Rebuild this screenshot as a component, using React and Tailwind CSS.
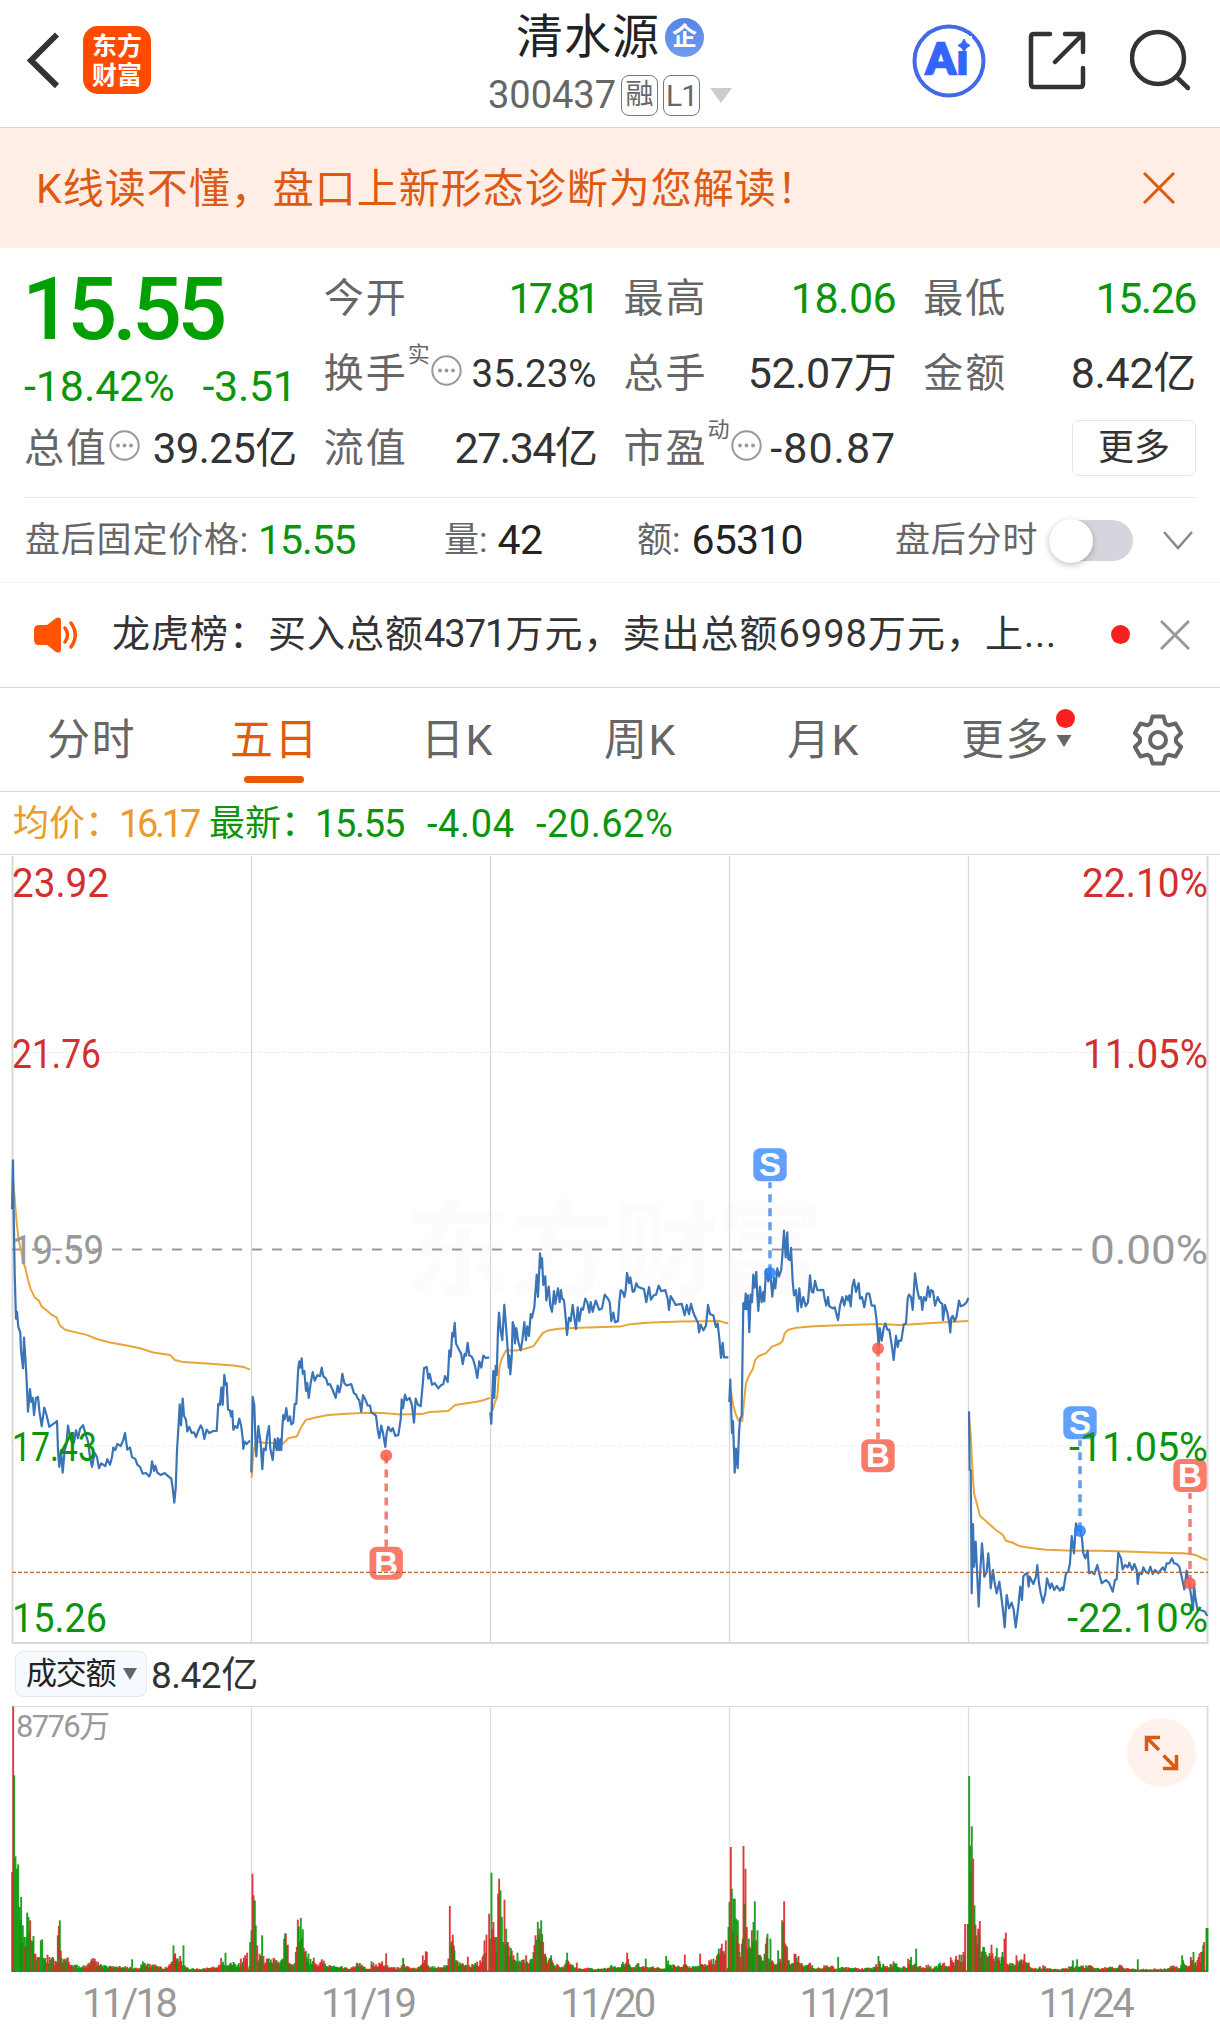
import { useState } from 'react';

const INDICES = [
  // x in thirds of a pixel, y in plot units below 1130
  {
    x0: 0,
    price: '36,230 39,88 41,240 44,420 48,548 51,528 55,572 61,588 63,640 69,692 72,603 76,660 80,730 84,818 90,752 94,790 98,778 102,828 108,778 114,775 118,815 125,860 133,806 140,830 148,862 158,855 165,850 171,845 174,930 178,978 183,930 188,995 194,930 199,915 204,858 208,880 215,905 222,908 228,872 234,895 240,868 249,857 256,880 264,905 270,950 276,978 284,938 291,950 297,982 304,968 316,976 322,956 330,972 336,950 340,922 346,930 352,912 362,918 370,900 375,880 382,928 390,922 396,950 406,955 412,972 420,978 428,998 438,996 448,1006 452,995 456,962 462,990 466,975 472,995 482,1002 494,996 504,1005 514,1012 518,1040 523,1082 527,1040 531,930 536,850 539,797 543,858 548,780 552,830 558,842 562,875 568,862 575,880 582,878 588,892 594,875 602,858 608,870 613,897 620,870 628,880 640,874 650,874 655,795 660,798 664,748 668,798 673,711 677,740 680,735 684,812 690,815 693,832 697,816 700,870 706,860 712,865 718,838 724,862 728,895 730,926 734,905 740,912 750,902',
    avg: '40,150 44,200 50,270 56,320 62,345 70,385 76,400 84,435 92,462 104,486 116,495 126,514 140,524 156,537 170,545 180,568 195,580 215,585 260,595 290,607 330,617 380,626 420,634 460,646 510,653 525,668 550,674 620,678 700,684 730,688 750,696',
  },
  {
    x0: 0,
    price: '754,995 758,775 763,800 766,890 769,948 775,860 782,910 787,985 791,925 797,930 801,890 807,860 811,925 818,958 824,898 830,930 833,895 837,930 841,898 844,930 847,865 850,828 854,840 859,808 864,845 870,832 874,855 880,850 884,795 889,795 892,745 895,690 898,672 901,690 905,663 908,708 913,700 918,758 922,735 926,778 932,735 938,703 944,728 952,712 960,715 965,690 970,715 978,722 984,740 990,738 998,755 1007,778 1013,742 1018,762 1023,742 1027,708 1033,735 1040,742 1054,738 1062,765 1068,768 1073,780 1078,785 1084,818 1089,770 1097,785 1103,800 1110,800 1114,820 1122,825 1128,830 1133,870 1138,895 1144,858 1149,880 1156,920 1160,880 1165,862 1172,875 1178,866 1186,888 1195,886 1202,840 1205,782 1209,808 1215,768 1220,785 1229,778 1236,800 1242,850 1247,780 1254,798 1262,802 1268,740 1272,692 1280,688 1285,722 1289,708 1296,740 1304,735 1315,750 1322,742 1330,738 1335,715 1343,732 1348,640 1352,658 1357,590 1360,600 1364,560 1368,620 1378,640 1383,648 1388,680 1394,650 1398,655 1403,618 1408,655 1415,658 1420,668 1425,685 1432,720 1438,672 1444,690 1450,655 1457,662 1468,660',
    avg: '755,1010 758,960 762,925 768,905 790,908 850,910 865,895 890,890 905,860 918,842 950,834 985,828 1040,824 1100,821 1150,822 1200,826 1265,825 1290,819 1345,816 1365,799 1390,795 1430,789 1450,785 1470,778',
  },
  {
    x0: 480,
    price: '31,820 34,853 37,770 40,700 43,778 47,685 50,712 54,580 57,530 62,585 67,610 73,508 78,570 82,620 86,690 88,655 91,710 95,660 98,558 102,570 105,620 109,575 115,615 122,640 127,612 133,558 138,610 142,570 147,598 152,535 156,545 163,515 170,420 174,485 180,358 184,400 186,372 190,450 196,425 199,495 206,455 211,510 216,528 222,468 226,505 234,460 239,500 243,465 246,488 252,495 257,545 261,595 267,545 272,555 278,508 283,545 288,578 293,515 298,555 304,518 309,522 316,490 322,500 328,530 332,500 338,528 347,495 358,522 366,518 374,478 384,490 389,500 394,555 400,530 405,558 414,555 418,500 422,465 428,470 433,485 437,465 441,415 447,445 451,428 458,470 463,468 469,445 475,456 492,462 499,500 507,456 513,493 521,480 528,478 536,452 544,468 556,465 563,490 567,522 572,482 580,495 587,508 605,505 614,538 620,508 627,535 633,505 640,530 648,548 654,560 657,588 662,565 670,582 678,568 684,508 690,535 700,538 708,572 713,562 718,605 723,662 728,618 732,660 745,660',
    avg: '38,815 45,790 52,775 58,690 65,665 78,640 110,640 135,635 160,628 175,608 188,590 205,582 235,577 300,574 420,571 445,565 500,560 600,556 720,555 735,560 745,561',
  },
  {
    x0: 480,
    price: '748,790 751,725 753,800 756,880 759,845 764,995 768,925 773,982 777,880 780,840 785,830 788,620 790,503 794,520 797,475 800,520 804,480 808,587 812,478 816,500 820,420 824,458 829,412 832,480 835,525 840,455 845,500 850,470 853,498 858,405 865,440 870,405 877,484 882,430 886,460 892,402 897,425 904,405 908,350 912,292 917,370 922,297 925,375 930,378 933,342 938,440 942,480 948,465 953,527 958,460 964,515 970,485 977,512 984,500 990,422 995,470 1000,472 1005,438 1012,465 1030,464 1034,490 1039,510 1044,485 1048,512 1058,518 1064,515 1074,552 1080,510 1087,485 1093,510 1099,482 1105,495 1108,480 1112,512 1117,455 1122,435 1128,470 1136,445 1140,490 1146,485 1153,515 1160,475 1168,475 1175,510 1184,510 1189,545 1193,590 1196,630 1199,575 1205,612 1211,575 1216,562 1222,580 1228,580 1235,625 1241,668 1248,598 1253,630 1257,612 1264,612 1271,565 1278,562 1283,490 1287,478 1293,485 1298,522 1305,416 1312,465 1318,490 1323,485 1327,522 1332,485 1338,495 1344,455 1349,485 1353,465 1359,468 1365,510 1373,485 1380,500 1387,505 1389,552 1395,508 1402,530 1408,560 1411,588 1414,545 1418,540 1424,555 1430,540 1437,495 1442,512 1452,508 1460,500 1465,488',
    avg: '752,755 760,800 767,825 775,843 787,845 792,790 798,735 806,715 818,695 826,668 835,657 858,648 875,630 900,620 908,612 914,590 925,580 950,574 1000,570 1100,566 1200,563 1260,566 1300,564 1380,559 1465,555',
  },
  {
    x0: 900,
    y0: 1380,
    unit: 3,
    price: '207,94 209,270 212,270 215,640 219,432 222,560 227,485 232,590 236,680 241,570 246,490 250,540 253,590 260,575 265,520 269,570 272,625 279,570 284,610 290,640 298,605 304,650 309,690 314,742 320,645 327,685 335,668 341,690 347,742 355,680 361,620 366,660 370,590 375,583 382,580 386,620 389,590 400,612 408,590 412,555 417,610 422,640 429,668 436,640 441,595 450,625 455,610 463,630 470,618 480,632 487,622 490,630 498,580 505,575 510,548 515,468 522,520 528,430 534,450 540,445 546,475 550,520 556,535 563,512 567,580 575,575 583,583 592,555 600,590 605,610 618,600 628,610 638,635 645,600 650,598 655,518 663,535 668,568 675,555 683,562 688,548 697,570 703,552 710,570 713,612 718,578 725,582 730,562 737,575 745,580 751,560 758,582 765,570 775,580 782,570 788,562 794,572 800,550 808,550 816,535 822,550 830,552 838,560 845,590 853,628 860,572 865,600 870,625 875,660 879,690 882,615 887,660 893,690 900,690 908,692 915,695 922,708',
    avg: '207,110 213,180 217,260 222,340 230,370 240,408 262,427 285,448 308,464 318,482 340,489 360,499 400,505 440,509 520,512 600,512 700,515 780,518 850,520 875,523 890,526 905,534 922,540',
  },
];

// turnover peaks, "x:height" with the bar's colour where it is fixed
const TURNOVER = [
  { x0: 0, bars: '36:300r 39:797r 42:590g 46:347g 50:310 54:323g 58:195g 63:225g 68:140g 72:105g 78:105g 81:178g 85:165 90:155r 94:95 100:108g 106:55 112:45 118:45 122:95g 126:98g 132:38 142:52 148:45 155:42 160:40 168:30 173:110g 179:155g 184:42 190:38 196:34 203:44r 210:22 220:16 230:22 240:12 250:20 262:22 274:38 278:42r 288:32 300:22 320:16 340:18 360:16 393:12 396:38g 399:10 420:12 428:32g 440:22 455:20 468:20 490:10 505:18 514:30 520:80g 525:56r 530:35 540:48 547:20 550:80g 554:20 570:8 600:8 630:12 650:14 663:42r 672:20 676:58g 680:20 700:30 710:15 722:40 735:50 741:58r 745:10 750:90' },
  { x0: 0, bars: '754:125 757:295r 760:230r 764:215g 767:140 771:80r 778:55 783:50 786:110g 790:48 800:40r 820:42 840:28 848:40 852:100g 857:115r 863:82r 868:28 880:20 887:60 893:157r 902:162g 908:128g 914:60 925:55 935:25 941:43 955:18 965:38 975:25 990:20 1010:14 1025:18 1045:8 1070:28 1085:22 1100:8 1111:10 1114:32 1125:18 1146:32 1155:20 1158:56r 1162:20 1180:14 1198:10 1205:20 1209:42g 1214:16 1240:10 1260:15 1268:50r 1280:60r 1285:18 1320:14 1340:20 1345:40 1349:198r 1353:88g 1358:112r 1363:65g 1370:35 1385:25 1399:20 1403:46r 1407:20 1440:35 1447:45 1453:95r 1459:112r 1463:5 1467:175r' },
  { x0: 480, bars: '31:100 34:298g 37:130 40:150r 45:105 50:105 54:235r 57:280r 61:245g 65:165 69:90 73:217r 78:130g 83:90 92:72 100:50 105:35 112:58g 122:30 138:50 147:25 160:60 166:110r 173:150g 178:130r 183:155g 189:90 195:55 205:35 213:50g 222:20 235:20 250:12 256:25 261:58g 266:30 280:16 287:14 290:28r 293:8 320:12 350:8 380:10 392:20 410:12 428:30 436:25 441:58r 446:25 462:15 472:26 485:15 493:16 497:40g 501:15 550:10 555:10 558:48g 570:22 585:18 608:16 614:52r 619:20 640:15 660:55r 666:24 680:20 687:35 700:40 707:35 716:70g 725:85r 737:95r 740:5 745:135' },
  { x0: 480, bars: '748:210g 752:375r 755:250g 760:220 764:220g 768:160 773:155 778:60 785:85r 790:378r 796:310r 800:135 806:100 815:125 820:150 824:212g 828:95 832:125g 837:50 850:35 857:85 862:115g 866:40 871:100g 876:35 888:20 894:65 900:40 906:155r 912:212r 917:80 921:76 926:35 932:20 943:55 955:48 962:25 978:20 990:28 1000:12 1020:10 1038:20 1060:16 1070:10 1074:45g 1078:12 1110:12 1140:8 1165:12 1185:14 1195:48g 1200:25 1225:14 1240:32r 1255:15 1265:10 1284:40r 1293:45g 1300:20 1308:70g 1312:16 1330:14 1345:22 1355:10 1376:24 1392:28 1400:16 1412:44r 1420:30 1428:48r 1438:52r 1450:60 1455:144r 1459:5 1463:144r' },
  { x0: 900, bars: '204:144r 207:588g 212:300g 215:437g 219:340r 223:200g 228:110 234:130 239:153r 244:60 249:75g 256:60 262:45 274:82r 280:40 290:72g 298:35 307:60 313:100r 317:118r 321:25 340:24 349:50r 357:30 365:35 373:54r 380:28 386:28 392:10 410:8 429:20r 440:10 470:6 500:10 510:15 518:35g 524:12 531:38g 540:15 566:20 580:12 600:8 630:16 645:10 659:22 670:12 690:8 709:8 713:38g 717:6 760:8 800:8 820:20 835:10 840:12 846:50g 852:25 858:20 866:18 872:45 880:60g 886:30 895:45 903:60 912:90r 916:5 919:132g 922:132g' },
];

const MARKS = [
  { type: 'B', x: 386.2, dot: 1455.5, box: 1546.7 },
  { type: 'S', x: 770, dot: 1273, box: 1148.2 },
  { type: 'B', x: 878, dot: 1348.5, box: 1439.3 },
  { type: 'S', x: 1080, dot: 1531, box: 1406.3 },
  { type: 'B', x: 1190, dot: 1583.5, box: 1459 },
];

const LABELS = [
  { y: 883, left: '23.92', lw: 97, right: '22.10%', rw: 126, fill: '#d32f2f' },
  { y: 1054, left: '21.76', lw: 89, right: '11.05%', rw: 125, fill: '#d32f2f' },
  { y: 1250, left: '19.59', lw: 92, right: '0.00%', rw: 118, fill: '#999' },
  { y: 1447, left: '17.43', lw: 85, right: '-11.05%', rw: 139, fill: '#0b950b' },
  { y: 1618, left: '15.26', lw: 95, right: '-22.10%', rw: 141, fill: '#0b950b' },
];

const GRID_X = [12.5, 251.5, 490.5, 729.5, 968.5, 1207.5];

function toPoints({ x0, y0 = 1130, unit = 2.904 }, raw) {
  return raw
    .split(' ')
    .map((p) => {
      const [x, y] = p.split(',').map(Number);
      return `${(x0 + x / 3).toFixed(1)},${(y0 + y / unit).toFixed(1)}`;
    })
    .join(' ');
}

function buildBars() {
  let seed = 11;
  const rand = () => {
    seed = (seed * 16807) % 2147483647;
    return seed / 2147483647;
  };
  const out = [];
  TURNOVER.forEach(({ x0, bars }) => {
    const keys = bars.split(' ').map((k) => {
      const [x, v] = k.split(':');
      return { x: Number(x), h: parseInt(v, 10), c: v.slice(-1) };
    });
    keys.forEach((k, i) => {
      const color = k.c === 'r' || k.c === 'g' ? k.c : rand() > 0.5 ? 'r' : 'g';
      out.push({ x: x0 + k.x / 3, h: k.h / 3, c: color });
      const next = keys[i + 1];
      if (!next) return;
      const low = Math.min(k.h, next.h);
      for (let x = k.x + 3; x < next.x - 1.5; x += 3) {
        const t = (x - k.x) / (next.x - k.x);
        const mid = Math.min(k.h + (next.h - k.h) * t, low * 1.3 + 4);
        out.push({ x: x0 + x / 3, h: (mid * (0.45 + rand() * 0.6)) / 3 + 1, c: rand() > 0.5 ? 'r' : 'g' });
      }
    });
  });
  return out;
}

const BARS = buildBars();

const GEAR = Array.from({ length: 6 }, (_, k) => {
  const a = (k * Math.PI) / 3;
  return [[-7.5, -16.5], [-5.5, -23.5], [5.5, -23.5], [7.5, -16.5]]
    .map(([x, y]) => `${(x * Math.cos(a) - y * Math.sin(a)).toFixed(1)},${(x * Math.sin(a) + y * Math.cos(a)).toFixed(1)}`)
    .join(' ');
}).join(' ');

function InfoDot({ className }) {
  return (
    <svg className={className} width="31" height="31" viewBox="0 0 31 31" fill="none">
      <circle cx="15.5" cy="15.5" r="14.2" stroke="#999" strokeWidth="2" />
      <circle cx="9" cy="15.5" r="1.9" fill="#999" />
      <circle cx="15.5" cy="15.5" r="1.9" fill="#999" />
      <circle cx="22" cy="15.5" r="1.9" fill="#999" />
    </svg>
  );
}

function Cell({ label, sup, info, value, valueClass }) {
  return (
    <div className="flex h-[75px] items-center">
      <span className="text-[40px] tracking-[2px] text-[#666] whitespace-nowrap">{label}</span>
      {sup && <span className="-mt-[38px] w-[22px] text-[22px] text-[#666]">{sup}</span>}
      {info && <InfoDot className="-mt-1.5 ml-px shrink-0" />}
      <span className={`ml-auto whitespace-nowrap ${valueClass}`}>{value}</span>
    </div>
  );
}

function Header() {
  return (
    <header className="grid h-[128px] grid-cols-[1fr_auto_1fr] border-b border-[#d5d5d0]">
      <div className="flex pt-[26px] pl-[26px]">
        <svg width="34" height="68" viewBox="0 0 34 68" fill="none" stroke="#333" strokeWidth="6">
          <path d="M31 8.5 5 34.5 31 60" />
        </svg>
        <div className="ml-[23px] flex size-[68px] flex-col items-center justify-center rounded-[15px] bg-[#ff4a00] pt-[3px] text-[25px] leading-[28.5px] font-bold text-white">
          <span>东方</span>
          <span>财富</span>
        </div>
      </div>
      <div className="flex flex-col items-center pt-[2px]">
        <div className="flex h-[71px] items-center pb-px">
          <span className="text-[47px] tracking-[1px] text-[#222]">清水源</span>
          <span className="ml-[5px] flex size-[39px] items-center justify-center rounded-full bg-gradient-to-b from-[#5585e6] to-[#6f9cf0] text-[25px] font-bold text-white">企</span>
        </div>
        <div className="flex h-[44px] items-center text-[#666]">
          <span className="text-[38px]">300437</span>
          <span className="ml-[5px] flex h-[41px] w-[37px] items-center justify-center rounded-[8px] border-[1.5px] border-[#777] text-[28px]">融</span>
          <span className="ml-[5px] flex h-[41px] w-[37px] items-center justify-center rounded-[8px] border-[1.5px] border-[#777] text-[30px] tracking-[-1px]">L1</span>
          <svg className="ml-[10px]" width="22" height="15" viewBox="0 0 22 15" fill="#ccc"><path d="M0 0h22L11 15z" /></svg>
        </div>
      </div>
      <div className="flex justify-end gap-[42px] pt-[24px] pr-[30px]">
        <svg width="74" height="74" viewBox="0 0 74 74">
          <circle cx="37" cy="37" r="34.5" fill="none" stroke="#4169e8" strokeWidth="4" />
          <text x="14" y="49.5" fontFamily="Lato" fontSize="42" fontWeight="900" fill="#3366ff" stroke="#3366ff" strokeWidth="2.500" textLength="42">Ai</text>
          <rect x="43" y="12" width="17" height="15" fill="#fff" />
          <path d="M52 15q1.500 5 6 6.500-4.500 1.500-6 6.500-1.500-5-6-6.500Q50.500 20 52 15z" fill="#3366ff" stroke="#3366ff" />
        </svg>
        <svg width="58" height="74" viewBox="0 0 58 74" fill="none" stroke="#333" strokeWidth="4.500" strokeLinecap="round" strokeLinejoin="round">
          <path d="M22 10H6q-3 0-3 3v47q0 3 3 3h46q3 0 3-3V44" />
          <path d="M37 10h18v18M55 10 27 38" />
        </svg>
        <svg className="ml-[2px]" width="60" height="74" viewBox="0 0 60 74" fill="none" stroke="#333" strokeWidth="4.500" strokeLinecap="round">
          <circle cx="28" cy="34" r="26" />
          <path d="m46.500 53 11.500 11" />
        </svg>
      </div>
    </header>
  );
}

function Quote() {
  const green = 'text-[43px] text-[#0b950b]';
  const dark = 'text-[43px] text-[#333]';
  return (
    <section className="h-[249px] px-[24px] pt-[13px]">
      <div className="grid h-[236px] grid-cols-4 gap-x-[27px]">
        <div className="flex flex-col">
          <div className="mt-[11px] -ml-[2px] h-[89px] text-[88px] leading-[74px] font-medium tracking-[-4.8px] text-[#00a000]">15.55</div>
          <div className="flex h-[50px] items-center justify-between text-[43px] leading-none whitespace-nowrap text-[#0b950b]">
            <span className="tracking-[-0.1px]">-18.42%</span>
            <span className="tracking-[-0.3px]">-3.51</span>
          </div>
          <Cell label="总值" info value="39.25亿" valueClass="text-[42px] text-[#333] tracking-[-0.6px]" />
        </div>
        <div className="flex flex-col">
          <Cell label="今开" value="17.81" valueClass={`${green} tracking-[-4px]`} />
          <Cell label="换手" sup="实" info value="35.23%" valueClass="text-[38.5px] text-[#333]" />
          <Cell label="流值" value="27.34亿" valueClass={`${dark} tracking-[-1.5px]`} />
        </div>
        <div className="flex flex-col">
          <Cell label="最高" value="18.06" valueClass={`${green} tracking-[-0.5px]`} />
          <Cell label="总手" value="52.07万" valueClass={`${dark} tracking-[-0.4px]`} />
          <Cell label="市盈" sup="动" info value="-80.87" valueClass={`${dark} tracking-[1px]`} />
        </div>
        <div className="flex flex-col">
          <Cell label="最低" value="15.26" valueClass={`${green} tracking-[-1.5px]`} />
          <Cell label="金额" value="8.42亿" valueClass={`${dark} tracking-[-0.3px]`} />
          <div className="flex h-[75px] items-center justify-end pb-[2px]">
            <button className="h-[56px] w-[124px] rounded-[7px] border-[1.5px] border-[#e4e4e4] text-[36px] leading-none text-[#333]">更多</button>
          </div>
        </div>
      </div>
    </section>
  );
}

function AfterHours() {
  return (
    <section className="mx-[24px] grid h-[85px] grid-cols-[419px_193px_260px_1fr] items-center border-t border-[#ebebeb] pt-[2px] pl-px text-[35px] text-[#666]">
      <div className="flex items-center">
        <span className="tracking-[0.8px]">盘后固定价格:</span>
        <span className="ml-[9px] text-[41px] tracking-[-1.1px] text-[#0b950b]">15.55</span>
      </div>
      <div className="flex items-center">量:<span className="ml-[10px] text-[41px] tracking-[-0.5px] text-[#222]">42</span></div>
      <div className="flex items-center">额:<span className="ml-[11px] text-[41px] tracking-[-0.8px] text-[#222]">65310</span></div>
      <div className="flex items-center">
        <span className="-ml-[2px] tracking-[0.8px]">盘后分时</span>
        <div className="-mt-[2px] ml-[11px] h-[41px] w-[84px] shrink-0 rounded-full bg-[#d5d5de]">
          <div className="-mt-px size-[44px] rounded-full bg-white shadow-[0_2px_6px_rgba(0,0,0,0.25)]" />
        </div>
        <svg className="-mt-[2px] ml-[30px]" width="30" height="19" viewBox="0 0 30 19" fill="none" stroke="#888" strokeWidth="2.500"><path d="m1 1 14 16L29 1" /></svg>
      </div>
    </section>
  );
}

function News() {
  return (
    <section className="flex h-[106px] items-center border-y border-t-[#eee] border-b-[#d9d9d9] pb-px pl-[34px]">
      <svg width="44" height="36" viewBox="0 0 44 36" fill="#ff5500">
        <path d="M5 8h8L22 1q5-2 5 3v28q0 5-5 3l-9-7H5q-5 0-5-5V13q0-5 5-5z" />
        <path d="M31 11q5 7 0 14M37 6q8.500 12 0 24" fill="none" stroke="#ff5500" strokeWidth="3.500" strokeLinecap="round" />
      </svg>
      <span className="ml-[34px] w-[960px] text-[38px] tracking-[1px] whitespace-nowrap text-[#333]">
        龙虎榜：买入总额<span className="tracking-[-1px]">4371</span>万元，卖出总额6998万元，上...
      </span>
      <span className="ml-[39px] size-[19px] rounded-full bg-[#fa2020]" />
      <svg className="ml-[30px]" width="30" height="30" viewBox="0 0 30 30" stroke="#999" strokeWidth="3"><path d="m1 1 28 28M29 1 1 29" /></svg>
    </section>
  );
}

function Tabs() {
  const [active, setActive] = useState('五日');
  const tabs = ['分时', '五日', '日K', '周K', '月K'];
  return (
    <nav className="flex h-[104px] items-center border-b border-[#d9d9d9] text-[43px] text-[#666]">
      {tabs.map((t) => (
        <button key={t} onClick={() => setActive(t)}
          className={`relative flex h-full w-[183px] items-center justify-center pt-[2px] tracking-[1.5px] ${active === t ? 'text-[#e25a0c]' : ''}`}>
          {t}
          {active === t && <span className="absolute bottom-[8px] left-[61px] h-[7px] w-[60px] rounded-full bg-[#e8590a]" />}
        </button>
      ))}
      <button className="relative ml-[46px] flex items-center pt-[2px] tracking-[1.5px]">
        更多
        <span className="absolute top-[3px] left-[95px] size-[19px] rounded-full bg-[#fa2020]" />
        <svg className="ml-[6px]" width="16" height="12" viewBox="0 0 15 12" fill="#666"><path d="M0 0h15L7.500 12z" /></svg>
      </button>
      <svg className="ml-[59px]" width="54" height="54" viewBox="-27 -27 54 54" fill="none" stroke="#666" strokeWidth="4" strokeLinejoin="round">
        <polygon points={GEAR} />
        <circle r="8" />
      </svg>
    </nav>
  );
}

function Mark({ type, x, dot, box }) {
  const up = box < dot;
  const fill = type === 'B' ? '#fb7b6b' : '#62a1fb';
  return (
    <g>
      <line x1={x} x2={x} y1={up ? box + 34 : dot} y2={up ? dot : box} stroke={type === 'B' ? '#f08074' : '#639fe8'} strokeWidth="3.500" strokeDasharray="8 6" strokeDashoffset={up ? 2 : 0} />
      <circle cx={x} cy={dot} r="6" fill={type === 'B' ? '#fb5a48' : '#2b80f5'} fillOpacity="0.85" />
      <rect x={x - 16.700} y={box} width="33.400" height="33" rx="7" fill={fill} />
      <text x={x} y={box + 28} fontFamily="Liberation Sans" fontWeight="700" fontSize="33" fill="#fff" textAnchor="middle">{type}</text>
    </g>
  );
}

function PriceChart() {
  return (
    <svg className="block" width="1220" height="791" viewBox="0 854 1220 791" fontFamily="Roboto, sans-serif">
      <text x="614" y="1288" textAnchor="middle" fontFamily="Noto Sans CJK SC" fontWeight="700" fontSize="104" fill="#fefbfe">东方财富</text>
      <g stroke="#d8d8d8" fill="none">
        <path d="M0 854.500H1220" />
        {GRID_X.map((x, i) => (
          <path key={x} d={`M${x} 856V1643`} strokeWidth={i === 0 || i === 5 ? 2 : 1.300} />
        ))}
        <path d="M12 1643H1208.500" strokeWidth="2" />
      </g>
      <path d="M12 1052.500H1208M12 1446H1208" stroke="#ddd" strokeDasharray="1 2" />
      <path d="M12 1249.500H1082" stroke="#999" strokeWidth="2" strokeDasharray="10 10" />
      {INDICES.map((d, i) => (
        <g key={i} fill="none" strokeLinejoin="round">
          <polyline points={toPoints(d, d.avg)} stroke="#e9a43a" strokeWidth="2" />
          <polyline points={toPoints(d, d.price)} stroke="#3a74b8" strokeWidth="2.200" />
        </g>
      ))}
      {MARKS.map((m) => <Mark key={m.x} {...m} />)}
      <path d="M12 1572.300H1208" stroke="#b5683c" strokeWidth="1.300" strokeDasharray="4 2" />
      {LABELS.map((l) => (
        <g key={l.y} fill={l.fill} fontSize="40">
          <text x="12" y={l.y + 14} textLength={l.lw} lengthAdjust="spacingAndGlyphs">{l.left}</text>
          <text x={1208 - l.rw} y={l.y + 14} textLength={l.rw} lengthAdjust="spacingAndGlyphs">{l.right}</text>
        </g>
      ))}
    </svg>
  );
}

function TurnoverChart() {
  return (
    <div className="relative">
      <svg className="block" width="1220" height="267" viewBox="0 1706 1220 267">
        <g stroke="#ddd" fill="none">
          <path d="M12 1706.500H1208" />
          {GRID_X.slice(1).map((x, i) => <path key={x} d={`M${x} 1706V1972`} strokeWidth={i === 4 ? 2 : 1.300} />)}
        </g>
        {BARS.map((b, i) => (
          <rect key={i} x={b.x - 0.800} y={1972 - b.h} width="1.900" height={b.h} fill={b.c === 'r' ? '#d62828' : '#0a960a'} fillOpacity="0.9" />
        ))}
        <text x="16" y="1737" fontFamily="Roboto, 'Noto Sans CJK SC'" fontSize="31" fill="#999" textLength="94">8776万</text>
      </svg>
      <button className="absolute top-[12px] right-[24px] size-[69px] rounded-full bg-[#fff1ec]">
        <svg width="69" height="69" viewBox="0 0 69 69" fill="none" stroke="#d95a12" strokeWidth="3.500">
          <path d="M19.500 33V19.500H33M20 20l12 12M36 50.500h13.500V37M49 50 36.500 37.500" />
        </svg>
      </button>
    </div>
  );
}

export default function App() {
  return (
    <div className="h-[2029px] w-[1220px] overflow-hidden bg-white font-[Roboto,'Noto_Sans_CJK_SC',sans-serif]">
      <Header />
      <div className="flex h-[120px] items-center justify-between bg-[#ffeee6] pr-[45px] pl-[36px] text-[#de5a12]">
        <span className="pt-[4px] text-[41px] tracking-[1px]">K线读不懂，盘口上新形态诊断为您解读！</span>
        <svg width="32" height="32" viewBox="0 0 32 32" stroke="currentColor" strokeWidth="3"><path d="m1 1 30 30M31 1 1 31" /></svg>
      </div>
      <Quote />
      <AfterHours />
      <News />
      <Tabs />
      <div className="flex h-[62px] items-center pt-[2px] pl-[13px] text-[38px] whitespace-nowrap text-[#0b950b]">
        <span className="w-[106px] text-[36px] text-[#eb9a2c]">均价：</span>
        <span className="w-[90px] tracking-[-3.3px] text-[#eb9a2c]">16.17</span>
        <span className="w-[106px] text-[36px]">最新：</span>
        <span className="w-[112px] tracking-[-1.3px]">15.55</span>
        <span className="w-[109px] tracking-[0.6px]">-4.04</span>
        <span className="tracking-[0.5px]">-20.62%</span>
      </div>
      <PriceChart />
      <div className="flex h-[61px] items-center pb-[3px] pl-[15px]">
        <button className="flex h-[46px] w-[132px] items-center rounded-[8px] border border-[#e6e8ee] bg-[#f6f9ff] pl-[10px] text-[31px] tracking-[-1.2px] text-[#222]">
          成交额
          <svg className="ml-[8px]" width="14" height="12" viewBox="0 0 14 12" fill="#666"><path d="M0 0h14L7 12z" /></svg>
        </button>
        <span className="ml-1 pt-[3px] text-[37px] tracking-[-0.5px] text-[#333]">8.42亿</span>
      </div>
      <TurnoverChart />
      <div className="mr-[15px] ml-[9px] grid h-[56px] grid-cols-5 pt-[6px] text-center text-[40px] leading-[50px] tracking-[-2.6px] text-[#999]">
        {['11/18', '11/19', '11/20', '11/21', '11/24'].map((d) => <span key={d}>{d}</span>)}
      </div>
    </div>
  );
}
